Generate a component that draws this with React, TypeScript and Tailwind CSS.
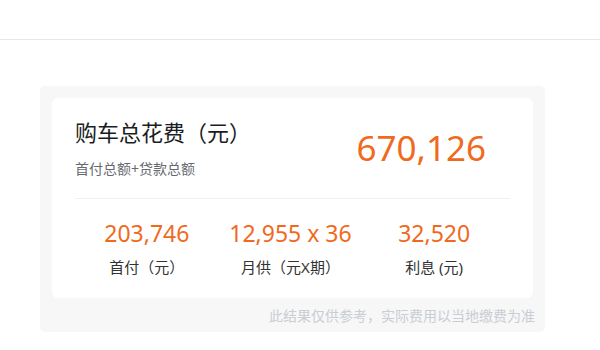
const items = [
  { value: '203,746', label: '首付（元）' },
  { value: '12,955 x 36', label: '月供（元X期）' },
  { value: '32,520', label: '利息 (元)' },
];

export default function App() {
  return (
    <div className="w-[600px] h-[350px] bg-white font-['Noto_Sans','Noto_Sans_CJK_SC',sans-serif]">
      <div className="h-[40px] border-b border-[#e8e8e8]" />
      <div className="pt-[46px] px-[40px]">
        <div className="w-[505px] rounded-[5px] bg-[#f7f7f7] px-[12px] pt-[12px]">
          <div className="rounded-[6px] bg-white px-[23px] pt-[19px] pb-[21px]">
            <div className="flex items-center justify-between">
              <div className="flex flex-col">
                <span className="text-[22px] leading-[30px] text-[#1a1d22]">购车总花费（元）</span>
                <span className="mt-[12px] text-[14px] leading-[20px] text-[#666a70]">首付总额+贷款总额</span>
              </div>
              <span className="mr-[24px] text-[35px] leading-[44px] text-[#f06a1e]">670,126</span>
            </div>
            <div className="mt-[19px] border-t border-[#f0f0f0]" />
            <div className="grid grid-cols-3 pt-[19px] pr-[4px]">
              {items.map((item, i) => (
                <div key={i} className="flex flex-col items-center">
                  <span className="text-[23px] leading-[30px] text-[#f06a1e]">{item.value}</span>
                  <span className="mt-[9px] text-[15px] leading-[20px] text-[#333]">{item.label}</span>
                </div>
              ))}
            </div>
          </div>
          <div className="mr-[-2px] flex h-[34px] items-center justify-end text-[14px] text-[#c9cdd4]">
            此结果仅供参考，实际费用以当地缴费为准
          </div>
        </div>
      </div>
    </div>
  );
}
